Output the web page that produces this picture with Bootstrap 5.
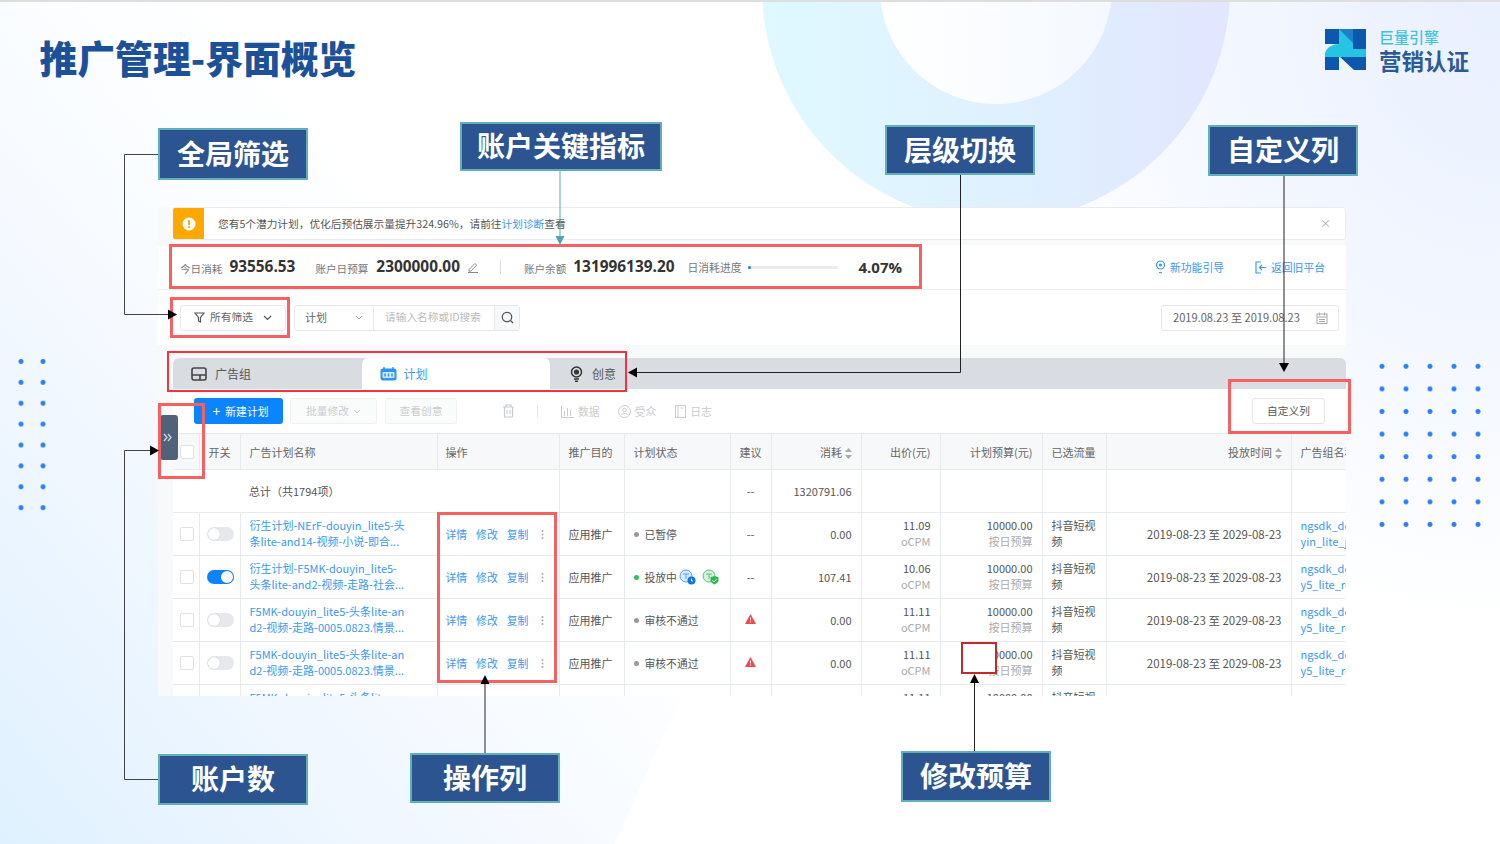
<!DOCTYPE html>
<html lang="zh">
<head>
<meta charset="utf-8">
<title>推广管理-界面概览</title>
<link href="https://cdn.jsdelivr.net/npm/bootstrap@5.3.0/dist/css/bootstrap.min.css" rel="stylesheet">
<style>
html,body{margin:0;padding:0;background:#fff;overflow:hidden}
body{font-family:"Noto Sans CJK SC","Noto Sans",sans-serif;font-size:12px;color:#555}
.slide{position:relative;width:1500px;height:844px;overflow:hidden;background:radial-gradient(ellipse 520px 620px at 100% 0,#e9f0fe 0,#f3f7ff 55%,rgba(255,255,255,0) 100%),#fff;border-top:2px solid #dedede}
.bg-wedge{position:absolute;left:0;top:-2px;width:730px;height:846px;clip-path:polygon(0 0,100% 0,100% 70%,84% 100%,0 100%);background:linear-gradient(50deg,#dff1ff 0,#f1f7ff 29%,#f9fcff 46%,#fff 65%)}
.bg-ring{position:absolute;left:762px;top:-248px;width:468px;height:468px;border-radius:50%;background:linear-gradient(90deg,#dff9ff 0,#dff1ff 50%,#e2e6fe 100%)}
.bg-hole{position:absolute;left:880px;top:-130px;width:232px;height:232px;border-radius:50%;background:linear-gradient(90deg,#fff 0,#f4f9ff 100%)}
.dots-l,.dots-r{position:absolute;background-image:radial-gradient(circle,#2f80ff 0,#2f80ff 2px,rgba(47,128,255,0) 3px)}
.dots-l{left:10px;top:349px;width:44px;height:167px;background-size:22px 20.9px}
.dots-r{left:1370px;top:353px;width:120px;height:180px;background-size:24px 22.6px}
.page-title{position:absolute;left:39.5px;top:30px;margin:0;font-size:37.8px;line-height:50px;font-weight:900;color:#1c5199}
.logo{position:absolute;left:1325px;top:27px;display:flex;gap:13px;align-items:flex-start}
.logo-text{display:flex;flex-direction:column;margin-top:-1px}
.logo-a{font-size:15px;line-height:18px;color:#3cc3e4;font-weight:500}
.logo-b{font-size:22.5px;line-height:28px;color:#2b5a97;font-weight:700}
.callout{position:absolute;display:flex;align-items:center;justify-content:center;background:#2c5490;border:2px solid #5fb0bb;color:#fff;font-size:28px;font-weight:700;line-height:1;z-index:4;padding-bottom:3px}
.c1{left:158px;top:126px;width:150px;height:52px}
.c2{left:460px;top:120px;width:202px;height:49px}
.c3{left:885px;top:123px;width:150px;height:50px}
.c4{left:1208px;top:123px;width:150px;height:51px}
.c5{left:158px;top:752px;width:150px;height:51px}
.c6{left:410px;top:751px;width:150px;height:50px}
.c7{left:901px;top:749px;width:150px;height:51px}
.app{position:absolute;left:158px;top:205px;width:1188px;height:489px;overflow:hidden;background:#f8f9fa;display:flex;flex-direction:column;z-index:1}
.tip{height:33px;margin:0 0 0 15px;background:#fff;border:1px solid #e9ebee;border-radius:3px;display:flex;align-items:center;flex:none;font-size:10.7px}
.tip-ic{width:31px;height:31px;background:#ffa800;border-radius:2px 0 0 2px;display:flex;align-items:center;justify-content:center;margin-right:14px;margin-left:-1px}
.tip-txt{padding-top:1px}
.tip a{color:#3a97f6;text-decoration:none}
.tip-x{margin-left:auto;margin-right:14px;color:#aaa;font-size:11px}
.metric{margin-top:5px;height:45px;background:#fff;border-bottom:1px solid #eef0f2;display:flex;align-items:center;padding-left:22px;flex:none}
.m-lab{color:#777;font-size:10.6px;margin-right:7px;margin-top:3px}
.m-lab2{color:#777;font-size:10.8px;margin-right:6px}
.m-num{font-family:"Open Sans","Noto Sans",sans-serif;font-weight:700;font-size:15.4px;color:#333;letter-spacing:0}
.m-gap1{margin-left:20px;margin-right:8px}
.m-gap2{margin-left:13px}
.m-pen{margin-left:7px;flex:none}
.m-div{width:1px;height:14px;background:#ddd;margin:0 23px 0 21px}
.m-bar{width:90px;height:3px;background:#e9ecef;border-radius:2px;display:block}
.m-bar-fill{display:block;height:3px;background:#0a84ff;border-radius:2px}
.m-pct{margin-left:21px;font-family:"Open Sans",sans-serif;font-weight:700;font-size:15px;color:#333}
.m-links{margin-left:auto;display:flex;align-items:center;gap:31px;padding-right:21px;color:#3a97f6;font-size:10.8px}
.m-link{display:flex;align-items:center;gap:4px}
.filters{height:55px;background:#fff;display:flex;align-items:center;padding-left:22px;flex:none}
.f-all{width:106px;height:26px;border:1px solid #e5e7ea;border-radius:3px;font-size:10.7px;color:#666;display:flex;align-items:center;justify-content:center;gap:5px;margin-right:8px}
.f-chev{margin-left:5px}
.f-group{display:flex;height:26px;border:1px solid #e5e7ea;border-radius:3px;width:226px}
.f-sel{width:79px;border-right:1px solid #e5e7ea;display:flex;align-items:center;justify-content:space-between;padding:0 10px;font-size:11px;color:#666}
.f-inp{width:121px;border-right:1px solid #e5e7ea;display:flex;align-items:center;padding-left:11px;color:#bbb;font-size:10.7px}
.f-btn{flex:1;display:flex;align-items:center;justify-content:center;background:#f7f8f9}
.f-date{margin-left:auto;margin-right:7px;width:178px;height:26px;border:1px solid #e5e7ea;border-radius:3px;display:flex;align-items:center;justify-content:space-between;padding:0 10px 0 11px;color:#666;font-size:11.1px}
.tabs-band{margin:13px 0 0 15px;height:31px;background:#d9dde1;border-radius:6px 6px 0 0;display:flex;flex:none}
.tab-i{width:188.5px;display:flex;align-items:center;color:#555;font-size:12px;gap:8px;padding-left:18px}
.tab-i.on{background:#fff;color:#3a97f6;padding-left:18px;border-radius:6px 6px 0 0;gap:7px}
.tab-i.last{width:auto;padding-left:20px;gap:9px}
.toolbar{margin-left:15px;height:44px;background:#fff;display:flex;align-items:center;padding-left:21px;flex:none;color:#c8ccd0;font-size:10.8px}
.b-new{height:26px;width:89px;background:#0a84ff;color:#fff;border-radius:3px;display:flex;align-items:center;justify-content:center;gap:5px;font-size:10.8px;border:0;padding:0 0 0 4px}
.b-plus{font-size:14px;line-height:1}
.b-off{height:26px;border:1px solid #eef0f2;background:#fafbfb;border-radius:3px;display:flex;align-items:center;justify-content:center;gap:4px;color:#c8ccd0;font-size:10.7px;padding:0;margin-left:7px}
.w87{width:87px}.w72{width:72px;margin-left:8px}
.t-ic{display:flex;align-items:center;gap:4px}
.ti1{margin-left:45px}.ti-div{width:1px;height:13px;background:#e5e7ea;margin-left:22px}.ti2{margin-left:23px}.ti3{margin-left:18px}.ti4{margin-left:19px}
.b-cols{margin-left:auto;margin-right:21px;width:73px;height:26px;border:1px solid #e3e5e8;background:#fff;border-radius:3px;font-size:10.7px;color:#555;padding:0}
.tbl-wrap{margin-left:15px;background:#fff;flex:1;overflow:hidden}
.ad-table.table{table-layout:fixed;width:1173px;margin:0;font-size:11px;color:#555;--bs-table-color:#555;--bs-table-bg:transparent}
.cw26{width:26px}.cw41{width:41px}.cw197{width:197px}.cw122{width:122px}.cw65{width:65px}.cw106{width:106px}.cw90{width:90px}.cw79{width:79px}.cw102{width:102px}.cw64{width:64px}.cw185{width:185px}.cw55{width:55px}
.ad-table.table>:not(caption)>*>*{padding:0 9px;vertical-align:middle;border-bottom:1px solid #e8ebee;border-right:1px solid #e8ebee;line-height:16px;box-shadow:none;overflow:hidden;white-space:nowrap}
.ad-table.table>tbody>tr>td:has(br){padding-bottom:2px}
.ad-table.table thead th{height:36px;background:#f7f8f9;font-weight:400;color:#666;border-top:1px solid #e8ebee}
.ad-table tbody tr{height:43px}
.ad-table .tot{height:43px}
.ad-table.table>:not(caption)>*>.op-cell{box-shadow:2px 0 3px rgba(0,0,0,.07);position:relative;padding-left:8px}
.ad-table.table>:not(caption)>*>.nob{border-right:0}
.ad-table.table>:not(caption)>*>.chk{padding:0 0 0 7px}
.ad-table .r{text-align:right}
.ad-table .sub{color:#aaa}
.ad-table .dt{font-size:11.5px}
.ad-table a{color:#3a97f6;text-decoration:none}
.ad-table .form-check-input{width:14px;height:14px;margin:0;border-color:#dfe1e4;border-radius:2px;display:block}
.warn{display:block;margin:-3px auto 0}
.tog{display:block;width:27px;height:14px;border-radius:7px;background:#e6e8eb;position:relative;margin-left:-2px}
.tog::after{content:"";position:absolute;left:1px;top:1px;width:12px;height:12px;border-radius:50%;background:#fff;box-shadow:0 0 1px rgba(0,0,0,.25)}
.tog.on{background:#0a84ff}
.tog.on::after{left:14px}
.ops{display:flex;align-items:center;color:#3a97f6;font-size:10.8px}
.ops span{margin-right:9px}
.ops svg{margin-left:4px;flex:none}
.st{display:flex;align-items:center;gap:6px;font-size:10.8px}
.st svg{flex:none}
.st svg:first-of-type{margin-left:-4px}
.sd{width:5px;height:5px;border-radius:50%;background:#999;flex:none}
.sd.g{background:#2cc35a}
.handle{position:absolute;left:160px;top:413px;width:18px;height:45px;background:#50627a;border-radius:3px;z-index:3;display:flex;align-items:center;justify-content:flex-start;padding-left:3px}
.rb{position:absolute;border:3px solid #f76060;z-index:3;pointer-events:none}
.rb1{left:169px;top:242px;width:753px;height:45px}
.rb2{left:170px;top:295px;width:120px;height:41px}
.rb3{left:167px;top:349px;width:460px;height:41px;border-width:2px;border-color:#f5333f}
.rb4{left:1228px;top:377px;width:123px;height:55px}
.rb5{left:158px;top:401px;width:47px;height:76px}
.rb6{left:437px;top:510px;width:120px;height:171px}
.rb7{left:961px;top:640px;width:36px;height:32px;border-width:2px;border-color:#c32a2a;background:#fff}
.lines{position:absolute;left:0;top:-2px;z-index:5;pointer-events:none}
</style>
</head>
<body>
<div class="slide">
  <div class="bg-wedge"></div>
  <div class="bg-ring"></div>
  <div class="bg-hole"></div>
  <div class="dots-l"></div>
  <div class="dots-r"></div>

  <h1 class="page-title">推广管理-界面概览</h1>

  <div class="logo">
    <svg width="41" height="41" viewBox="0 0 41 41">
      <rect x="0" y="0" width="14" height="15" fill="#0b58ad"/>
      <path d="M14 0H28V20H41V28H0V26C0 20 6 15 14 15Z" fill="#25c4e2"/>
      <path d="M14 0H28V14Z" fill="#1e7fc8"/>
      <rect x="28" y="0" width="13" height="20" fill="#0b58ad"/>
      <rect x="0" y="28" width="14" height="13" fill="#0b58ad"/>
      <path d="M15 28H41V41H29Z" fill="#0b58ad"/>
    </svg>
    <div class="logo-text"><span class="logo-a">巨量引擎</span><span class="logo-b">营销认证</span></div>
  </div>

  <div class="callout c1">全局筛选</div>
  <div class="callout c2">账户关键指标</div>
  <div class="callout c3">层级切换</div>
  <div class="callout c4">自定义列</div>
  <div class="callout c5">账户数</div>
  <div class="callout c6">操作列</div>
  <div class="callout c7">修改预算</div>

  <div class="app">
    <div class="tip">
      <div class="tip-ic"><svg width="14" height="14" viewBox="0 0 14 14"><circle cx="7" cy="7" r="6.5" fill="#fff"/><rect x="6" y="3" width="2" height="5.2" rx="1" fill="#ffa800"/><circle cx="7" cy="10.2" r="1.1" fill="#ffa800"/></svg></div>
      <span class="tip-txt">您有5个潜力计划，优化后预估展示量提升324.96%，请前往<a href="#">计划诊断</a>查看</span>
      <span class="tip-x">×</span>
    </div>

    <div class="metric">
      <span class="m-lab">今日消耗</span><span class="m-num">93556.53</span>
      <span class="m-lab m-gap1">账户日预算</span><span class="m-num">2300000.00</span>
      <svg class="m-pen" width="12" height="12" viewBox="0 0 12 12" fill="none" stroke="#888" stroke-width="1"><path d="M2 8.5 8 2.5l1.7 1.7-6 6H2zM1 11.5h10"/></svg>
      <span class="m-div"></span>
      <span class="m-lab">账户余额</span><span class="m-num">131996139.20</span>
      <span class="m-lab2 m-gap2">日消耗进度</span>
      <span class="m-bar"><span class="m-bar-fill" style="width:4.07%"></span></span>
      <span class="m-pct">4.07%</span>
      <div class="m-links">
        <span class="m-link"><svg width="11" height="14" viewBox="0 0 11 14" fill="none" stroke="#3a97f6" stroke-width="1.2"><circle cx="5.5" cy="5" r="4"/><circle cx="5.5" cy="5" r="1" fill="#3a97f6"/><path d="M4 12.5h3"/></svg>新功能引导</span>
        <span class="m-link"><svg width="12" height="13" viewBox="0 0 12 13" fill="none" stroke="#3a97f6" stroke-width="1.2"><path d="M6 1H1v11h5M11 6.5H4.5M7 4 4.5 6.5 7 9"/></svg>返回旧平台</span>
      </div>
    </div>

    <div class="filters">
      <div class="f-all"><svg width="11" height="11" viewBox="0 0 11 11" fill="none" stroke="#555" stroke-width="1.2"><path d="M1 1h9L6.5 5.5V10L4.500 9V5.500z"/></svg>所有筛选<svg class="f-chev" width="9" height="6" viewBox="0 0 9 6" fill="none" stroke="#555" stroke-width="1.2"><path d="M1 1l3.500 3.500L8 1"/></svg></div>
      <div class="f-group">
        <div class="f-sel">计划<svg width="8" height="5" viewBox="0 0 8 5" fill="none" stroke="#aaa"><path d="M1 1l3 3 3-3"/></svg></div>
        <div class="f-inp">请输入名称或ID搜索</div>
        <div class="f-btn"><svg width="13" height="13" viewBox="0 0 13 13" fill="none" stroke="#555" stroke-width="1.3"><circle cx="6" cy="6" r="4.700"/><path d="M9.500 9.500 12 12"/></svg></div>
      </div>
      <div class="f-date">2019.08.23 至 2019.08.23<svg width="12" height="12" viewBox="0 0 12 12" fill="none" stroke="#aaa"><rect x="1" y="2" width="10" height="9.500"/><path d="M1 5h10M3.500 .5v3M8.500 .5v3M3 7.500h6M3 9.500h6"/></svg></div>
    </div>

    <div class="tabs-band">
      <div class="tab-i"><svg width="16" height="14" viewBox="0 0 16 14" fill="none" stroke="#444" stroke-width="1.6"><rect x="1" y="1" width="14" height="12" rx="2"/><path d="M1 8h14M9 8v5"/></svg>广告组</div>
      <div class="tab-i on"><svg width="17" height="14" viewBox="0 0 17 14"><rect x=".5" y="1.500" width="16" height="12" rx="2.500" fill="#2b95f8"/><path d="M4 0v3M13 0v3" stroke="#2b95f8" stroke-width="1.400"/><rect x="2.500" y="5" width="12" height="6" rx="1" fill="#d3e9fe"/><path d="M5 6.500v3M8.500 6.500v3M12 6.500v3" stroke="#2b95f8" stroke-width="1.500"/></svg>计划</div>
      <div class="tab-i last"><svg width="13" height="16" viewBox="0 0 13 16" fill="none" stroke="#333" stroke-width="1.500"><circle cx="6.500" cy="6" r="5"/><circle cx="6.500" cy="6" r="1.800" fill="#333"/><path d="M4 13h5M5 15.200h3"/></svg>创意</div>
    </div>

    <div class="toolbar">
      <button class="b-new" type="button"><span class="b-plus">+</span> 新建计划</button>
      <div class="b-off w87">批量修改<svg width="8" height="5" viewBox="0 0 8 5" fill="none" stroke="#c8ccd0"><path d="M1 1l3 3 3-3"/></svg></div>
      <div class="b-off w72">查看创意</div>
      <div class="t-ic ti1"><svg width="13" height="14" viewBox="0 0 13 14" fill="none" stroke="#c8ccd0" stroke-width="1.200"><path d="M1 3h11M4 3V1h5v2M2.500 3v10h8V3M5 6v4M8 6v4"/></svg></div>
      <span class="ti-div"></span>
      <div class="t-ic ti2"><svg width="13" height="13" viewBox="0 0 13 13" fill="none" stroke="#c8ccd0"><path d="M.5 1v11.500H13M3.500 6v5M6.500 3v8M9.500 5v6"/></svg>数据</div>
      <div class="t-ic ti3"><svg width="13" height="13" viewBox="0 0 13 13" fill="none" stroke="#c8ccd0"><circle cx="6.500" cy="6.500" r="6"/><circle cx="6.500" cy="5" r="1.800"/><path d="M3.500 10c.5-2 5.500-2 6 0"/></svg>受众</div>
      <div class="t-ic ti4"><svg width="11" height="13" viewBox="0 0 11 13" fill="none" stroke="#c8ccd0"><rect x=".5" y=".5" width="10" height="12"/><path d="M3 .5v12M5.500 3h3"/></svg>日志</div>
      <button class="b-cols" type="button">自定义列</button>
    </div>

    <div class="tbl-wrap">
      <table class="table ad-table">
        <colgroup>
          <col class="cw26"><col class="cw41"><col class="cw197"><col class="cw122"><col class="cw65"><col class="cw106"><col class="cw41"><col class="cw90"><col class="cw79"><col class="cw102"><col class="cw64"><col class="cw185"><col class="cw55">
        </colgroup>
        <thead>
          <tr>
            <th class="chk"><input class="form-check-input" type="checkbox"></th>
            <th>开关</th><th>广告计划名称</th><th class="op-cell">操作</th><th>推广目的</th><th>计划状态</th><th>建议</th>
            <th class="r">消耗 <svg width="7" height="11" viewBox="0 0 7 11" fill="#aaa"><path d="M3.500 0 7 4H0zM3.500 11 0 7h7z"/></svg></th>
            <th class="r">出价(元)</th><th class="r">计划预算(元)</th><th>已选流量</th>
            <th class="r">投放时间 <svg width="7" height="11" viewBox="0 0 7 11" fill="#aaa"><path d="M3.500 0 7 4H0zM3.500 11 0 7h7z"/></svg></th>
            <th class="nob">广告组名称</th>
          </tr>
        </thead>
        <tbody>
          <tr class="tot">
            <td class="nob"></td><td class="nob"></td><td class="nob">总计（共1794项）</td><td class="op-cell"></td><td></td><td></td><td class="text-center">--</td><td class="r">1320791.06</td><td></td><td></td><td></td><td></td><td class="nob"></td>
          </tr>
          <tr>
            <td class="chk"><input class="form-check-input" type="checkbox"></td><td><span class="tog"></span></td>
            <td><a href="#">衍生计划-NErF-douyin_lite5-头<br>条lite-and14-视频-小说-即合...</a></td>
            <td class="op-cell"><div class="ops"><span>详情</span><span>修改</span><span>复制</span><svg width="3" height="9" viewBox="0 0 3 9" fill="#aaa"><circle cx="1.500" cy="1" r="1"/><circle cx="1.500" cy="4.500" r="1"/><circle cx="1.500" cy="8" r="1"/></svg></div></td>
            <td>应用推广</td><td><div class="st"><i class="sd"></i>已暂停</div></td><td class="text-center">--</td><td class="r">0.00</td>
            <td class="r">11.09<br><span class="sub">oCPM</span></td><td class="r">10000.00<br><span class="sub">按日预算</span></td><td>抖音短视<br>频</td><td class="r dt">2019-08-23 至 2029-08-23</td><td class="nob"><a href="#">ngsdk_do<br>yin_lite_jy</a></td>
          </tr>
          <tr>
            <td class="chk"><input class="form-check-input" type="checkbox"></td><td><span class="tog on"></span></td>
            <td><a href="#">衍生计划-F5MK-douyin_lite5-<br>头条lite-and2-视频-走路-社会...</a></td>
            <td class="op-cell"><div class="ops"><span>详情</span><span>修改</span><span>复制</span><svg width="3" height="9" viewBox="0 0 3 9" fill="#aaa"><circle cx="1.500" cy="1" r="1"/><circle cx="1.500" cy="4.500" r="1"/><circle cx="1.500" cy="8" r="1"/></svg></div></td>
            <td>应用推广</td>
            <td><div class="st"><i class="sd g"></i>投放中
              <svg width="17" height="16" viewBox="0 0 17 16"><circle cx="7" cy="7" r="6" fill="#d7ebfd" stroke="#4aa3f0"/><path d="M4 5h6M7 5v5" stroke="#4aa3f0"/><circle cx="12.500" cy="11.500" r="4" fill="#1174e6"/><path d="M12.500 9.500v2.500h1.500" stroke="#fff" fill="none"/></svg>
              <svg width="17" height="16" viewBox="0 0 17 16"><circle cx="7" cy="7" r="6" fill="#d8f3dd" stroke="#58c473"/><path d="M4 5h6M7 5v5" stroke="#58c473"/><path d="M12.500 7l4 1.300v3c0 2-2 3.500-4 4.200-2-.7-4-2.200-4-4.200v-3z" fill="#2eb84f"/><path d="M10.500 11.300l1.500 1.500 2.500-2.500" stroke="#fff" fill="none"/></svg>
            </div></td>
            <td class="text-center">--</td><td class="r">107.41</td>
            <td class="r">10.06<br><span class="sub">oCPM</span></td><td class="r">10000.00<br><span class="sub">按日预算</span></td><td>抖音短视<br>频</td><td class="r dt">2019-08-23 至 2029-08-23</td><td class="nob"><a href="#">ngsdk_do<br>y5_lite_re</a></td>
          </tr>
          <tr>
            <td class="chk"><input class="form-check-input" type="checkbox"></td><td><span class="tog"></span></td>
            <td><a href="#">F5MK-douyin_lite5-头条lite-an<br>d2-视频-走路-0005.0823.情景...</a></td>
            <td class="op-cell"><div class="ops"><span>详情</span><span>修改</span><span>复制</span><svg width="3" height="9" viewBox="0 0 3 9" fill="#aaa"><circle cx="1.500" cy="1" r="1"/><circle cx="1.500" cy="4.500" r="1"/><circle cx="1.500" cy="8" r="1"/></svg></div></td>
            <td>应用推广</td><td><div class="st"><i class="sd"></i>审核不通过</div></td>
            <td class="text-center"><svg class="warn" width="11" height="10" viewBox="0 0 11 10"><path d="M5.500 0 11 10H0z" fill="#f5454d"/><path d="M5.500 3.500v3M5.500 7.500v1" stroke="#fff"/></svg></td><td class="r">0.00</td>
            <td class="r">11.11<br><span class="sub">oCPM</span></td><td class="r">10000.00<br><span class="sub">按日预算</span></td><td>抖音短视<br>频</td><td class="r dt">2019-08-23 至 2029-08-23</td><td class="nob"><a href="#">ngsdk_do<br>y5_lite_re</a></td>
          </tr>
          <tr>
            <td class="chk"><input class="form-check-input" type="checkbox"></td><td><span class="tog"></span></td>
            <td><a href="#">F5MK-douyin_lite5-头条lite-an<br>d2-视频-走路-0005.0823.情景...</a></td>
            <td class="op-cell"><div class="ops"><span>详情</span><span>修改</span><span>复制</span><svg width="3" height="9" viewBox="0 0 3 9" fill="#aaa"><circle cx="1.500" cy="1" r="1"/><circle cx="1.500" cy="4.500" r="1"/><circle cx="1.500" cy="8" r="1"/></svg></div></td>
            <td>应用推广</td><td><div class="st"><i class="sd"></i>审核不通过</div></td>
            <td class="text-center"><svg class="warn" width="11" height="10" viewBox="0 0 11 10"><path d="M5.500 0 11 10H0z" fill="#f5454d"/><path d="M5.500 3.500v3M5.500 7.500v1" stroke="#fff"/></svg></td><td class="r">0.00</td>
            <td class="r">11.11<br><span class="sub">oCPM</span></td><td class="r">10000.00<br><span class="sub">按日预算</span></td><td>抖音短视<br>频</td><td class="r dt">2019-08-23 至 2029-08-23</td><td class="nob"><a href="#">ngsdk_do<br>y5_lite_re</a></td>
          </tr>
          <tr>
            <td class="chk"></td><td></td>
            <td><a href="#">F5MK-douyin_lite5-头条lite-<br>d2-视频</a></td>
            <td class="op-cell"></td><td></td><td></td><td></td><td></td>
            <td class="r">11.11<br><span class="sub">oCPM</span></td><td class="r">10000.00<br><span class="sub">按日预算</span></td><td>抖音短视<br>频</td><td></td><td class="nob"></td>
          </tr>
        </tbody>
      </table>
    </div>
  </div>

  <div class="handle"><svg width="9" height="9" viewBox="0 0 9 9" fill="none" stroke="#cfd6de" stroke-width="1.300"><path d="M1 1l3 3.500-3 3.500M5 1l3 3.500-3 3.500"/></svg></div>

  <div class="rb rb1"></div>
  <div class="rb rb2"></div>
  <div class="rb rb3"></div>
  <div class="rb rb4"></div>
  <div class="rb rb5"></div>
  <div class="rb rb6"></div>
  <div class="rb rb7"></div>

  <svg class="lines" width="1500" height="844" viewBox="0 0 1500 844" fill="none">
    <path d="M158 154.500H124.500V314.500H168" stroke="#444"/>
    <path d="M168 309.500 177 314.500 168 319.500Z" fill="#000"/>
    <path d="M560 171V236" stroke="#57a7ad"/>
    <path d="M555.500 236H564.500L560 245Z" fill="#4fa6ac"/>
    <path d="M960.500 175V372.500H636" stroke="#222"/>
    <path d="M637 367.500 628 372.500 637 377.500Z" fill="#000"/>
    <path d="M1284 176V364" stroke="#222"/>
    <path d="M1279 363H1289L1284 372Z" fill="#000"/>
    <path d="M158 779.500H124.500V450.500H151" stroke="#444"/>
    <path d="M150 445.500 159 450.500 150 455.500Z" fill="#000"/>
    <path d="M485 753V683" stroke="#222"/>
    <path d="M480.500 684H489.500L485 675Z" fill="#000"/>
    <path d="M974.500 751V682" stroke="#222"/>
    <path d="M970 683H979L974.500 674Z" fill="#000"/>
  </svg>
</div>
<script src="https://cdn.jsdelivr.net/npm/bootstrap@5.3.0/dist/js/bootstrap.bundle.min.js"></script>
</body>
</html>
